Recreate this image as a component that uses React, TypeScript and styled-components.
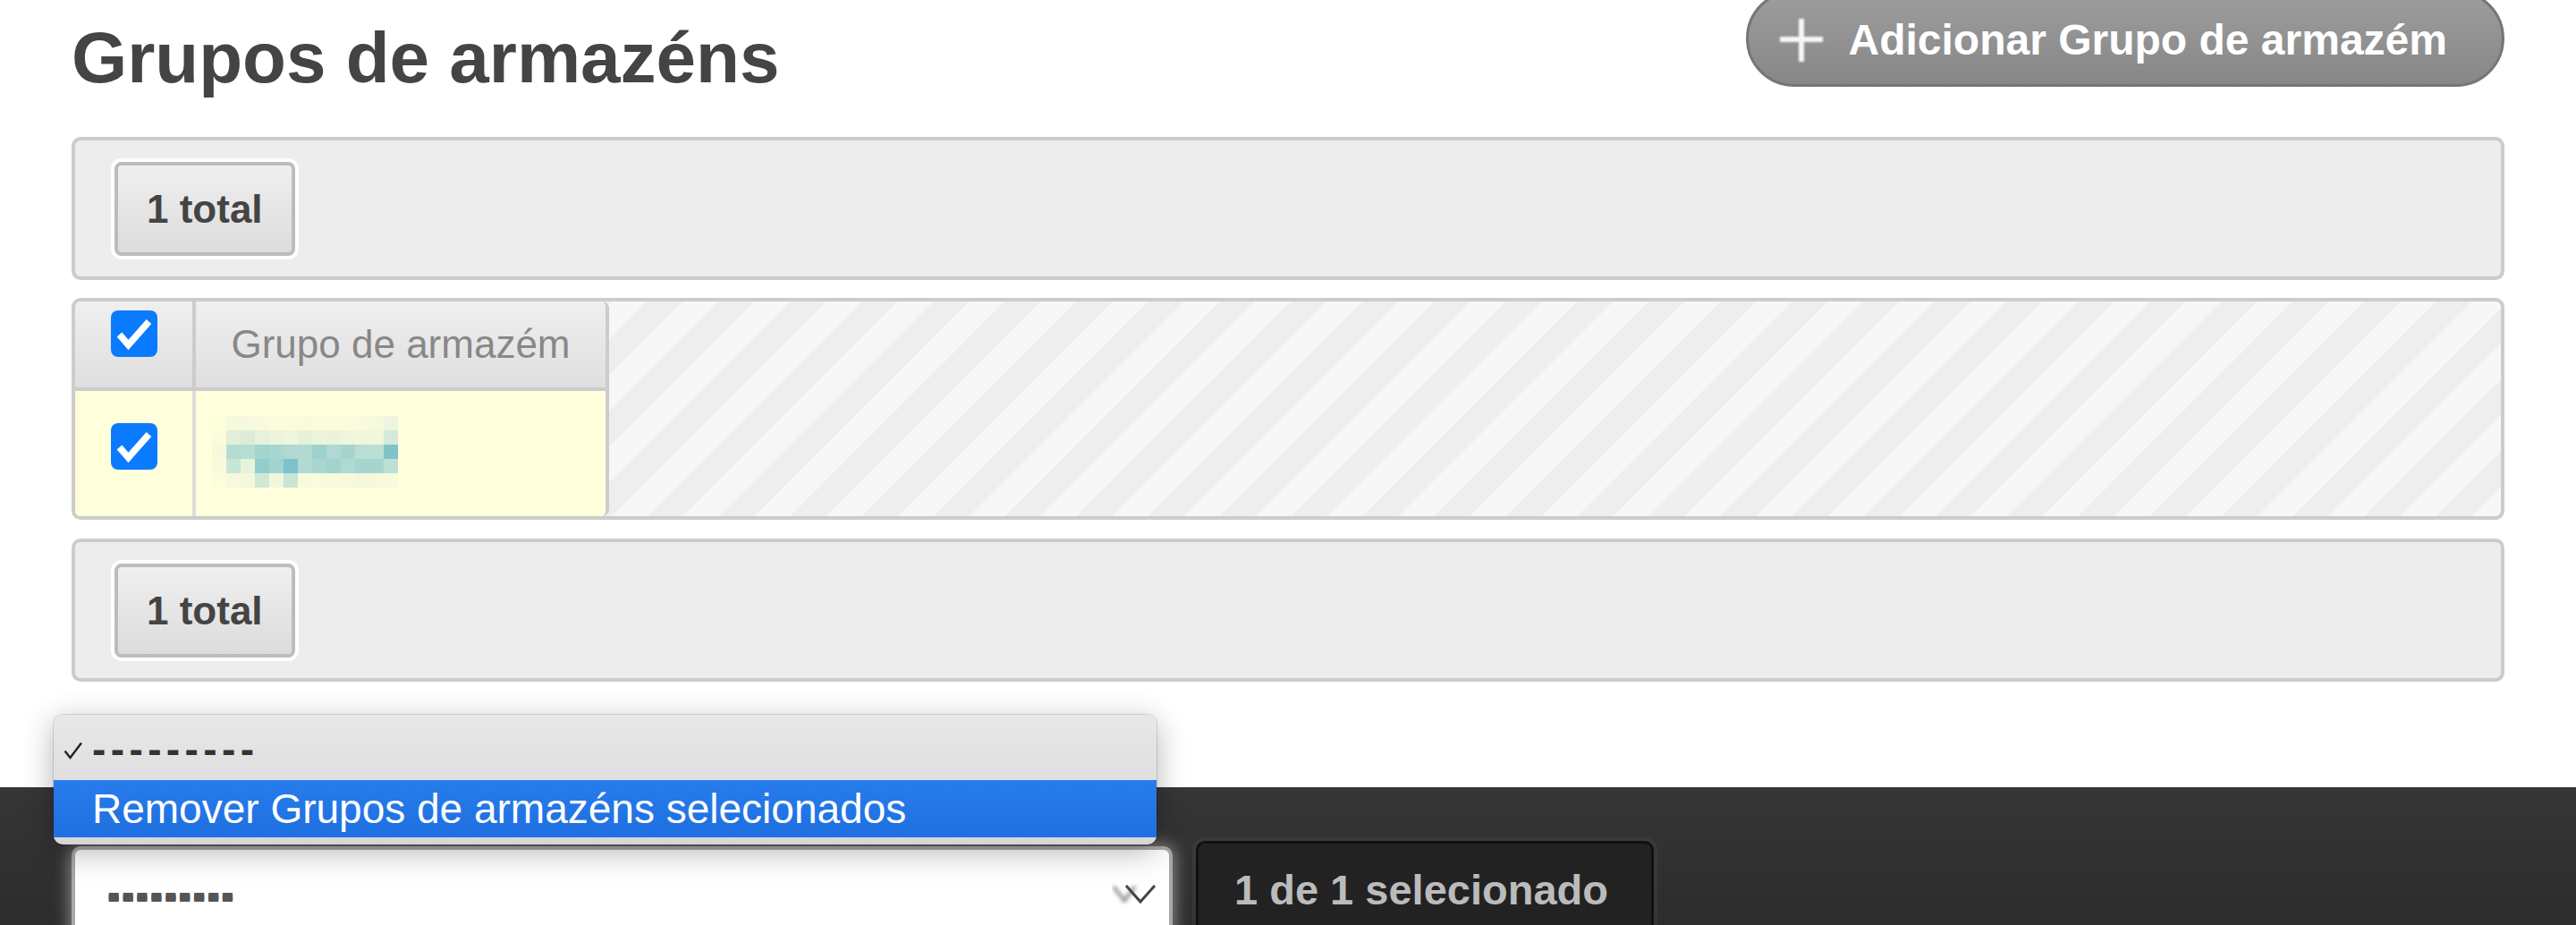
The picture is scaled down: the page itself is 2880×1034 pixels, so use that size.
import React from "react";
import styled, { createGlobalStyle } from "styled-components";

const GlobalStyle = createGlobalStyle`
  html, body {
    margin: 0;
    padding: 0;
    overflow: hidden;
    background: #fff;
  }
  body {
    font-family: "Liberation Sans", Arial, Helvetica, sans-serif;
  }
  * {
    box-sizing: border-box;
  }
`;

const Page = styled.div`
  width: 2880px;
  height: 1034px;
  display: flex;
  flex-direction: column;
`;

const Content = styled.div`
  padding: 0 80px;
  display: flex;
  flex-direction: column;
`;

const HeaderRow = styled.div`
  display: flex;
  justify-content: space-between;
  align-items: flex-start;
`;

const Title = styled.h1`
  margin: 25px 0 0;
  font-size: 80px;
  line-height: 80px;
  font-weight: bold;
  color: #444;
`;

const AddButton = styled.a`
  margin-top: -11px;
  height: 108px;
  display: flex;
  align-items: center;
  gap: 29px;
  padding: 3px 61px 0 35px;
  border: 3px solid #767676;
  border-radius: 54px;
  background: linear-gradient(#9d9d9d, #878787);
  color: #fff;
  font-size: 48px;
  font-weight: bold;
  text-decoration: none;
  white-space: nowrap;
`;

const PlusIcon = styled.svg`
  width: 48px;
  height: 48px;
  filter: blur(0.8px);
  opacity: 0.92;
`;

const Toolbar = styled.div<{ $top: number }>`
  margin-top: ${(p) => p.$top}px;
  border: 4px solid #ccc;
  border-radius: 10px;
  background: #ededed;
  padding: 24px 44px 23px;
  display: flex;
`;

const TotalButton = styled.span`
  height: 105px;
  padding: 0 32px;
  border: 4px solid #bcbcbc;
  border-radius: 8px;
  background: linear-gradient(#efefef, #dcdcdc);
  box-shadow: 0 0 0 4px #fff;
  font-size: 44px;
  font-weight: bold;
  line-height: 97px;
  color: #444;
`;

const TableWrap = styled.div<{ $top: number }>`
  margin-top: ${(p) => p.$top}px;
  border: 4px solid #ccc;
  border-radius: 10px;
  overflow: hidden;
  background-color: #f7f7f7;
  background-image: linear-gradient(
    135deg,
    #eee 25%,
    transparent 25%,
    transparent 50%,
    #eee 50%,
    #eee 75%,
    transparent 75%,
    transparent
  );
  background-size: 80px 80px;
  display: flex;
`;

const Grid = styled.div`
  display: grid;
  grid-template-columns: 135px 458px;
  grid-template-rows: 100px 140px;
  border-right: 4px solid #ccc;
  border-radius: 0 8px 8px 0;
  overflow: hidden;
`;

const CheckCell = styled.div<{ $head?: boolean }>`
  display: flex;
  justify-content: center;
  align-items: flex-start;
  padding-top: ${(p) => (p.$head ? 10 : 36)}px;
  background: ${(p) => (p.$head ? "linear-gradient(#efefef, #dfdfdf)" : "#ffffdc")};
  border-right: 4px solid ${(p) => (p.$head ? "#ccc" : "#ddd")};
  border-bottom: ${(p) => (p.$head ? "4px solid #ccc" : "none")};
`;

const HeadCell = styled.div`
  background: linear-gradient(#efefef, #dfdfdf);
  border-bottom: 4px solid #ccc;
  text-align: center;
  font-size: 44px;
  line-height: 96px;
  color: #888;
  white-space: nowrap;
`;

const BodyCell = styled.div`
  background: #ffffdc;
  padding: 28px 0 0 18px;
`;

const CheckBox = styled.span`
  width: 52px;
  height: 52px;
  border-radius: 8px;
  background: #0a7bff;
  display: flex;
`;

const ActionBar = styled.div`
  margin-top: 118px;
  flex: 1;
  background: linear-gradient(#363636, #2b2b2b);
  padding: 60px 80px 0;
  display: flex;
  align-items: flex-start;
  gap: 26px;
`;

const SelectBox = styled.div`
  position: relative;
  margin-top: 6px;
  width: 1231px;
  height: 106px;
  border: 4px solid #a8a8a8;
  border-radius: 10px;
  background: #fff;
  box-shadow: 0 0 18px 2px rgba(255, 255, 255, 0.45);
  display: flex;
  align-items: center;
  justify-content: space-between;
  padding: 0 12px 0 36px;
`;

const SelectValue = styled.span`
  font-size: 43px;
  line-height: 60px;
  font-weight: bold;
  letter-spacing: 1.6px;
  color: #555;
  text-shadow: 0 2px 0 #555, 0 -2px 0 #555, 0 3px 0 #555;
`;

const Chevron = styled.svg`
  width: 52px;
  height: 24px;
`;

const Menu = styled.div`
  position: absolute;
  top: -151px;
  left: -24px;
  width: 1233px;
  border-radius: 10px;
  overflow: hidden;
  background: linear-gradient(#e8e8e8, #d6d6d6);
  box-shadow: 0 0 0 1px rgba(0, 0, 0, 0.12), 0 8px 34px rgba(0, 0, 0, 0.3);
  padding-bottom: 8px;
  z-index: 5;
`;

const MenuItem = styled.div<{ $active?: boolean }>`
  height: ${(p) => (p.$active ? 64 : 73)}px;
  display: flex;
  align-items: center;
  padding-left: 43px;
  position: relative;
  font-size: 46px;
  color: ${(p) => (p.$active ? "#fff" : "#333")};
  background: ${(p) => (p.$active ? "linear-gradient(#287cec, #1e6fe0)" : "transparent")};
  white-space: nowrap;
`;

const MenuCheck = styled.svg`
  position: absolute;
  left: 11px;
  top: 30px;
  width: 22px;
  height: 20px;
`;

const MenuDashes = styled.span`
  font-weight: bold;
  letter-spacing: 5.4px;
  padding-top: 2px;
`;

const SelectedCount = styled.div`
  width: 512px;
  height: 120px;
  padding: 28px 0 0 40px;
  border: 3px solid #111;
  border-radius: 10px;
  background: #222;
  box-shadow: 0 0 0 4px rgba(255, 255, 255, 0.04);
  color: #bbb;
  font-size: 47px;
  font-weight: bold;
  line-height: 47px;
  white-space: nowrap;
`;

const mosaic = [
  ["#fefedc", "#f6f9dd", "#f6f9dd", "#fafbdc", "#fbfcdc", "#fbfcdc", "#fafbdc", "#fbfcdc", "#fbfcdc", "#fbfcdc", "#fafbdc", "#f6f9dc", "#eef4de"],
  ["#fbfcdd", "#e2efda", "#dcecd8", "#e6f2da", "#ecf5db", "#eef6db", "#e6f1d9", "#ecf5db", "#e9f3db", "#eef6dc", "#f0f7dc", "#f0f7dc", "#d3eadb"],
  ["#f6f9dc", "#b4dcd1", "#b6ddd2", "#a4d4cf", "#a8d6d0", "#afd9d2", "#b2dad2", "#9ed2cf", "#afd9d2", "#a6d5d0", "#b9ded4", "#bbdfd4", "#80c3cb"],
  ["#f8fadc", "#c8e6d6", "#e7f3da", "#94cdcd", "#a2d3cf", "#7ec1ca", "#b2dad2", "#a9d6d0", "#a1d3cf", "#b0d9d1", "#a6d5d0", "#a6d5d0", "#bde0d5"],
  ["#fcfddc", "#f6f9dc", "#f4f8dc", "#d0e8d6", "#f1f7dc", "#c8e5d5", "#f8fadc", "#fafbdc", "#f8fadc", "#f6f9dc", "#f4f8dc", "#f6f9dc", "#f8fadc"],
];

const Tick = () => (
  <CheckBox>
    <svg width="52" height="52" viewBox="0 0 52 52">
      <polyline
        points="9.5,27 19.5,38.5 42.5,12.5"
        fill="none"
        stroke="#fff"
        strokeWidth="7.5"
        strokeLinejoin="miter"
      />
    </svg>
  </CheckBox>
);

const Redacted = () => (
  <svg width="208" height="80" viewBox="0 0 208 80">
    {mosaic.map((row, r) =>
      row.map((c, i) => <rect key={`${r}-${i}`} x={i * 16} y={r * 16} width="16" height="16" fill={c} />)
    )}
  </svg>
);

const App = () => {
  return (
    <Page>
      <GlobalStyle />
      <Content>
        <HeaderRow>
          <Title>Grupos de armazéns</Title>
          <AddButton href="#">
            <PlusIcon viewBox="0 0 48 48">
              <rect x="21" y="0" width="6" height="48" fill="#fff" />
              <rect x="0" y="20" width="48" height="6" fill="#fff" />
            </PlusIcon>
            Adicionar Grupo de armazém
          </AddButton>
        </HeaderRow>

        <Toolbar $top={48}>
          <TotalButton>1 total</TotalButton>
        </Toolbar>

        <TableWrap $top={20}>
          <Grid>
            <CheckCell $head>
              <Tick />
            </CheckCell>
            <HeadCell>Grupo de armazém</HeadCell>
            <CheckCell>
              <Tick />
            </CheckCell>
            <BodyCell>
              <Redacted />
            </BodyCell>
          </Grid>
        </TableWrap>

        <Toolbar $top={21}>
          <TotalButton>1 total</TotalButton>
        </Toolbar>
      </Content>

      <ActionBar>
        <SelectBox>
          <Menu>
            <MenuItem>
              <MenuCheck viewBox="0 0 22 20">
                <polyline points="1.5,10.5 7.5,18 20,1.5" fill="none" stroke="#222" strokeWidth="2.4" />
              </MenuCheck>
              <MenuDashes>---------</MenuDashes>
            </MenuItem>
            <MenuItem $active>Remover Grupos de armazéns selecionados</MenuItem>
          </Menu>
          <SelectValue>---------</SelectValue>
          <Chevron viewBox="0 0 52 24">
            <polyline points="2,4 14,20 26,4" fill="none" stroke="#999" strokeWidth="4" style={{ filter: "blur(2px)" }} />
            <polyline points="16,3 32,21 48,3" fill="none" stroke="#444" strokeWidth="3" />
          </Chevron>
        </SelectBox>
        <SelectedCount>1 de 1 selecionado</SelectedCount>
      </ActionBar>
    </Page>
  );
};

export default App;
